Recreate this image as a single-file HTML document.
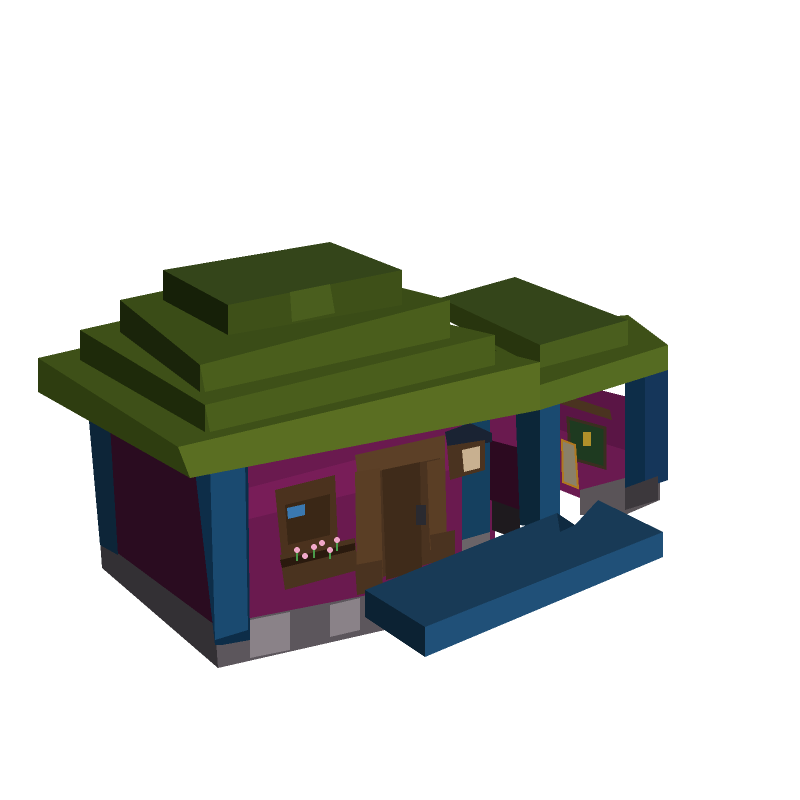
<!DOCTYPE html>
<html><head><meta charset="utf-8"><style>html,body{margin:0;padding:0;background:#fff;}svg{display:block}</style></head>
<body>
<svg width="800" height="800" viewBox="0 0 800 800" xmlns="http://www.w3.org/2000/svg" shape-rendering="crispEdges">
<!-- annex back walls -->
<polygon points="490,400 560,380 640,400 640,490 560,470 490,500" fill="#5a1545"/>
<polygon points="560,430 625,450 625,490 585,500 560,490" fill="#6a1a50"/>
<polygon points="580,490 625,478 660,478 660,500 625,515 580,515" fill="#5a5458"/>
<!-- annex right pillar -->
<polygon points="625,365 645,360 668,355 668,480 645,488 625,492" fill="#0d2d48"/>
<polygon points="645,360 668,355 668,480 645,488" fill="#15365a"/>
<polygon points="625,488 658,476 658,500 625,510" fill="#3c383c"/>
<!-- left wall -->
<polygon points="88,410 200,470 215,640 100,545" fill="#2a0c20"/>
<polygon points="100,540 215,625 218,668 102,568" fill="#333034"/>
<polygon points="88,410 110,425 118,555 100,545" fill="#0d2538"/>
<!-- front wall -->
<polygon points="195,470 540,395 540,470 495,480 495,590 215,640" fill="#6a1a4f"/>
<polygon points="240,490 470,430 470,465 245,520" fill="#781d58"/>
<polygon points="215,625 495,570 495,605 218,668" fill="#5c565c"/>
<polygon points="250,620 290,612 290,650 250,658" fill="#8a8288"/>
<polygon points="330,605 360,598 360,630 330,637" fill="#8a8288"/>
<!-- front left pillar -->
<polygon points="195,470 248,460 250,640 222,645 215,645" fill="#0d2d48"/>
<polygon points="210,466 245,458 248,630 215,640" fill="#1a4a70"/>
<!-- pillar by door -->
<polygon points="462,405 490,398 490,540 462,548" fill="#15405f"/>
<polygon points="462,540 490,532 490,560 462,566" fill="#6a6468"/>
<!-- annex inner -->
<polygon points="490,440 520,448 520,510 490,500" fill="#2c0a20"/>
<polygon points="492,500 520,510 520,540 492,530" fill="#1e1a1e"/>
<!-- annex front pillar -->
<polygon points="515,395 540,390 560,385 560,520 540,528 520,525" fill="#0c2638"/>
<polygon points="540,390 560,385 560,515 540,522" fill="#1a4a70"/>
<!-- window -->
<polygon points="275,490 335,475 338,545 282,560" fill="#4b321e"/>
<polygon points="285,505 330,494 330,535 288,545" fill="#3a2716"/>
<polygon points="287,508 305,504 305,515 288,519" fill="#3a78b0"/>
<polygon points="280,555 355,538 358,570 285,590" fill="#4a331f"/>
<polygon points="280,560 355,543 355,550 282,568" fill="#2a1a0e"/>
<g fill="#f0a8c8"><circle cx="297" cy="550" r="3"/><circle cx="305" cy="556" r="3"/><circle cx="314" cy="547" r="3"/><circle cx="322" cy="543" r="3"/><circle cx="330" cy="550" r="3"/><circle cx="337" cy="540" r="3"/></g>
<g fill="#4a9a4a"><rect x="296" y="553" width="2" height="8"/><rect x="313" y="550" width="2" height="8"/><rect x="329" y="553" width="2" height="6"/><rect x="336" y="543" width="2" height="8"/></g>
<!-- door -->
<polygon points="355,455 445,435 445,460 358,478" fill="#5c4027"/>
<polygon points="360,475 440,458 442,560 365,582" fill="#4a3320"/>
<polygon points="382,470 420,462 422,570 386,580" fill="#3f2b1a"/>
<polygon points="355,472 380,468 383,578 357,585" fill="#5a3e25"/>
<polygon points="427,462 445,458 447,545 430,550" fill="#5a3e25"/>
<polygon points="355,565 382,560 383,590 357,595" fill="#4a3320"/>
<polygon points="430,535 455,530 455,560 432,565" fill="#4a3320"/>
<rect x="416" y="505" width="10" height="20" fill="#2a2a30"/>
<!-- lantern -->
<polygon points="445,432 470,423 492,433 492,442 448,450" fill="#1a2333"/>
<polygon points="447,446 485,440 485,470 450,480" fill="#4a3320"/>
<polygon points="462,450 480,446 480,468 464,472" fill="#c8b090"/>
<!-- sign -->
<rect x="548" y="382" width="12" height="16" fill="#a8a4a8"/>
<polygon points="555,392 610,410 612,420 555,402" fill="#4a3320"/>
<polygon points="568,418 605,428 605,468 570,458" fill="#1e3a20" stroke="#3a2e20" stroke-width="3"/>
<rect x="583" y="432" width="8" height="14" fill="#b0902a"/>
<polygon points="562,440 575,445 578,488 563,482" fill="#8a8068" stroke="#b07820" stroke-width="2"/>
<!-- step -->
<polygon points="365,590 557,513 575,525 598,500 663,532 425,627" fill="#183a56"/>
<polygon points="557,513 575,525 560,532" fill="#0f2a40"/>
<polygon points="425,627 663,532 663,557 425,657" fill="#205078"/>
<polygon points="365,590 425,627 425,657 365,617" fill="#0c2233"/>
<!-- annex roof lower eave -->
<polygon points="470,330 628,315 668,345 540,385" fill="#3e5018"/>
<polygon points="540,385 668,345 668,370 540,410" fill="#556b22"/>
<polygon points="470,330 540,385 540,410 500,390" fill="#2e3d10"/>
<!-- annex upper tier -->
<polygon points="440,298 515,277 628,320 540,345" fill="#34451a"/>
<polygon points="540,345 628,320 628,345 540,368" fill="#4a5e1e"/>
<polygon points="440,298 540,345 540,368 450,322" fill="#28350e"/>
<!-- main roof bottom tier -->
<polygon points="38,358 290,300 540,362 178,447" fill="#3e5018"/>
<polygon points="38,358 178,447 190,478 38,392" fill="#2e3d10"/>
<polygon points="178,447 540,362 540,410 190,478" fill="#5a6e22"/>
<!-- tier2 -->
<polygon points="80,330 280,285 495,335 205,405" fill="#3e5018"/>
<polygon points="80,330 205,405 205,432 80,360" fill="#1e2a0a"/>
<polygon points="205,405 495,335 495,365 210,432" fill="#4a5e1c"/>
<!-- tier3 -->
<polygon points="120,300 300,262 450,300 200,365" fill="#3a4c17"/>
<polygon points="120,300 200,365 200,392 120,332" fill="#1a240a"/>
<polygon points="200,365 450,300 450,338 205,392" fill="#4a5e1c"/>
<!-- top tier -->
<polygon points="163,270 330,242 402,270 228,305" fill="#34451a"/>
<polygon points="163,270 228,305 228,335 163,300" fill="#162008"/>
<polygon points="228,305 402,270 402,305 228,335" fill="#3e5018"/>
<polygon points="290,292 330,284 335,313 292,322" fill="#4a5e1e"/>
</svg>
</body></html>
